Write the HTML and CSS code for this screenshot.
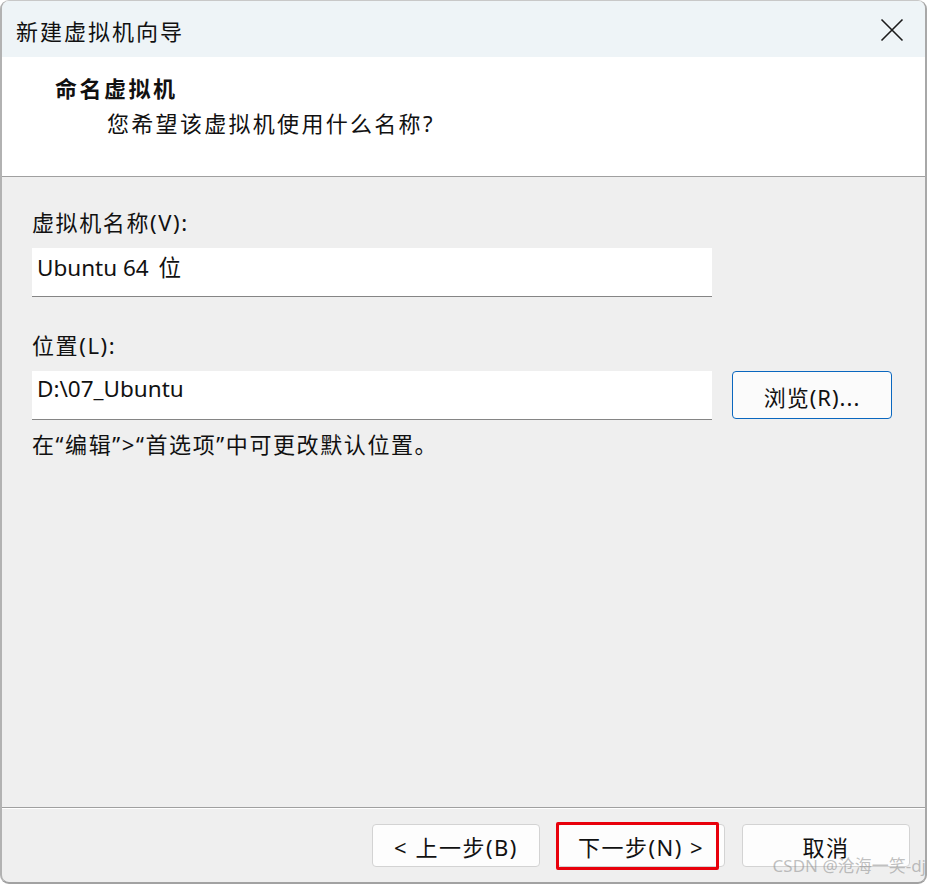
FILE: index.html
```html
<!DOCTYPE html>
<html lang="zh-CN">
<head>
<meta charset="utf-8">
<title>新建虚拟机向导</title>
<link rel="stylesheet" href="styles.css">
</head>
<body>
<div class="window">
  <div class="titlebar">
    <span class="title">新建虚拟机向导</span>
    <svg class="close" width="24" height="24" viewBox="0 0 24 24"><path d="M1.5 1.5 L22.5 22.5 M22.5 1.5 L1.5 22.5" stroke="#1b1b1b" stroke-width="1.6" fill="none"/></svg>
  </div>
  <div class="header">
    <div class="h-title">命名虚拟机</div>
    <div class="h-sub">您希望该虚拟机使用什么名称<span class="latin">?</span></div>
  </div>
  <div class="content">
    <div class="label first">虚拟机名称(V):</div>
    <div class="row">
      <div class="input">Ubuntu 64 <span class="cjk">位</span></div>
    </div>
    <div class="label second">位置(L):</div>
    <div class="row">
      <div class="input">D:\07_Ubuntu</div>
      <div class="browse">浏览(R)...</div>
    </div>
    <div class="hint">在“编辑”&gt;“首选项”中可更改默认位置。</div>
  </div>
  <div class="footer">
    <div class="btn">&lt; 上一步(B)</div>
    <div class="btn next">下一步(N) &gt;<span class="highlight"></span></div>
    <div class="btn">取消</div>
  </div>
  <div class="watermark">CSDN @沧海一笑-dj</div>
</div>
</body>
</html>
```
FILE: styles.css
```css
html, body {
  margin: 0;
  padding: 0;
  background: #ffffff;
}
body {
  font-family: "Noto Sans", "Open Sans", "Noto Sans CJK SC", sans-serif;
  color: #111;
}
.window {
  position: relative;
  box-sizing: border-box;
  width: 927px;
  height: 884px;
  border-left: 2px solid #b2b2b2;
  border-right: 2px solid #a8a8a8;
  border-bottom: 2px solid #a2a2a2;
  border-top: 1px solid #c8c8c8;
  border-radius: 9px;
  background: #efefef;
  display: flex;
  flex-direction: column;
  overflow: hidden;
}
.titlebar {
  height: 56px;
  background: #eef4f7;
  display: flex;
  align-items: center;
  justify-content: space-between;
  padding: 0 21px 0 14px;
  flex: none;
}
.title {
  font-family: "Noto Sans CJK SC", sans-serif;
  font-size: 22px;
  letter-spacing: 2px;
  color: #111;
  line-height: 30px;
  margin-top: 1px;
}
.close {
  display: block;
  margin-top: 2px;
}
.header {
  background: #ffffff;
  height: 120px;
  border-bottom: 1px solid #a0a0a0;
  box-sizing: border-box;
  padding: 15px 0 0 53px;
  flex: none;
}
.h-title {
  font-family: "Noto Sans CJK SC", sans-serif;
  font-weight: 700;
  font-size: 22px;
  letter-spacing: 2.5px;
  line-height: 30px;
}
.h-sub {
  font-family: "Noto Sans CJK SC", sans-serif;
  font-size: 22px;
  letter-spacing: 2.3px;
  line-height: 30px;
  margin: 5px 0 0 52px;
}
.h-sub .latin {
  font-family: "Noto Sans", sans-serif;
  letter-spacing: 0;
}
.content {
  flex: 1;
  padding: 30px 0 0 30px;
  border-bottom: 1px solid #a0a0a0;
  box-shadow: 0 1px 0 #ffffff;
}
.label, .hint {
  font-size: 22px;
  line-height: 30px;
  letter-spacing: 1.6px;
  font-family: "Noto Sans", "Noto Sans CJK SC", sans-serif;
}
.label.second {
  margin-top: 33px;
}
.row {
  display: flex;
  align-items: flex-start;
  gap: 20px;
  margin-top: 11px;
}
.input {
  box-sizing: border-box;
  width: 680px;
  height: 49px;
  background: #ffffff;
  border-bottom: 1px solid #858585;
  padding: 3px 0 0 5px;
  font-size: 22.5px;
  line-height: 30px;
  white-space: pre;
}
.input .cjk {
  font-family: "Noto Sans CJK SC", sans-serif;
  margin-left: 4px;
}
.browse {
  box-sizing: border-box;
  width: 160px;
  height: 48px;
  border: 1px solid #0a67bf;
  border-radius: 4px;
  background: #fbfbfb;
  display: flex;
  align-items: center;
  justify-content: center;
  font-size: 22px;
  letter-spacing: 1px;
  padding-top: 2px;
}
.hint {
  margin-top: 9px;
}
.footer {
  height: 73px;
  box-sizing: border-box;
  flex: none;
  display: flex;
  justify-content: flex-end;
  align-items: flex-start;
  gap: 17px;
  padding: 15px 15px 0 0;
  margin-top: 1px;
}
.btn {
  position: relative;
  box-sizing: border-box;
  width: 168px;
  height: 43px;
  border: 1px solid #d3d3d3;
  border-radius: 4px;
  background: #fdfdfd;
  display: flex;
  align-items: center;
  justify-content: center;
  font-size: 22px;
  letter-spacing: 1.5px;
  padding-top: 1px;
}
.highlight {
  position: absolute;
  left: -2px;
  top: -3px;
  width: 163px;
  height: 48px;
  box-sizing: border-box;
  border: 3px solid #e8000b;
  border-radius: 2px;
}
.watermark {
  position: absolute;
  right: -1px;
  bottom: 5px;
  font-family: "Noto Sans", "Noto Sans CJK SC", sans-serif;
  font-size: 17px;
  color: rgba(140, 140, 140, 0.55);
  white-space: nowrap;
}
```
